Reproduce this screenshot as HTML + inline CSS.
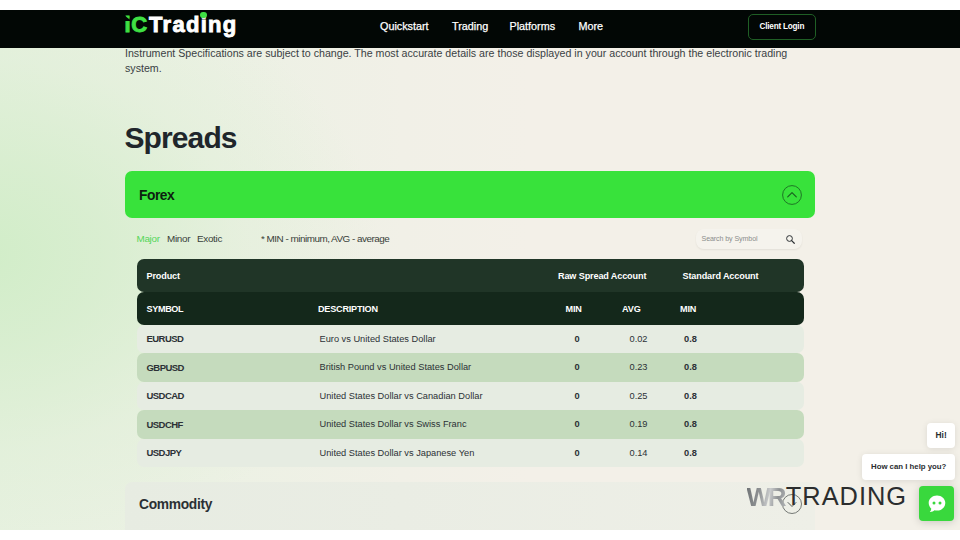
<!DOCTYPE html>
<html lang="en">
<head>
<meta charset="utf-8">
<title>IC Trading - Spreads</title>
<style>
*{margin:0;padding:0;box-sizing:border-box;}
html,body{width:960px;height:540px;overflow:hidden;background:#fff;}
body{font-family:"Liberation Sans",Arial,sans-serif;position:relative;color:#1e2328;}
.abs{position:absolute;white-space:nowrap;line-height:1;}
#page{position:absolute;left:0;top:10px;width:960px;height:520px;overflow:hidden;
  background:
    radial-gradient(ellipse 400px 300px at -20px 245px, rgba(209,237,200,1) 0%, rgba(212,237,203,0.78) 30%, rgba(218,238,209,0.35) 65%, rgba(225,240,216,0) 100%),
    linear-gradient(90deg,#e7f1e0 0%,#ecf1e4 22%,#f1f0e7 42%,#f3f0e8 55%,#f3f0e8 100%);
}
#nav{position:absolute;left:0;top:0;width:960px;height:38px;background:#020705;}
/* text */
.intro{left:125px;top:35.5px;font-size:10.65px;line-height:15.6px;color:#3a3f44;white-space:nowrap;}
h1.abs{left:124.5px;top:113.4px;font-size:30px;font-weight:700;color:#20262b;letter-spacing:-0.9px;}
.bar{position:absolute;left:125px;width:690px;border-radius:7px;}
#forex{top:161px;height:47px;background:#38e23b;}
#commodity{top:472px;height:60px;background:linear-gradient(90deg,#e7ece2 0%,#eaede4 40%,#eeefe7 100%);}
.tabs{top:224.4px;font-size:9.9px;letter-spacing:-0.3px;color:#384039;}
#tbl{position:absolute;left:137px;top:249px;width:667px;}
.hrow{position:absolute;left:0;width:667px;border-radius:7px;color:#fff;font-weight:700;font-size:9.1px;letter-spacing:-0.13px;}
.row{position:absolute;left:0;width:667px;height:28.5px;border-radius:7px;font-size:9.25px;color:#2c3136;}
.row .s{font-weight:700;letter-spacing:-0.55px;font-size:9.5px;top:9.7px;}
.row.l{background:#e6ece2;}
.row.d{background:#c5dbbd;}
.row span,.hrow span{position:absolute;white-space:nowrap;line-height:1;}
.row span{top:10px;}
.b{font-weight:700;}
</style>
</head>
<body>
<div id="page">

  <div class="abs intro">Instrument Specifications are subject to change. The most accurate details are those displayed in your account through the electronic trading<br>system.</div>

  <div id="nav">
    <span class="abs" id="logo" style="left:124.5px;top:4.3px;font-size:22px;font-weight:700;letter-spacing:1.3px;color:#fff;-webkit-text-stroke:0.9px currentColor;"><span style="color:#3fe044;letter-spacing:0.7px;margin-right:1.1px;">iC</span>Trad<span style="position:relative;">i<span style="position:absolute;left:-0.4px;top:-0.6px;width:6.4px;height:6.4px;border-radius:50%;background:#3fe044;"></span></span>ng</span>
    <div class="abs" style="left:123.6px;top:4.6px;width:7.6px;height:6.3px;background:#020705;clip-path:polygon(0 0,0 100%,100% 100%);"></div>
    <span class="abs nv" style="left:380px;top:10.5px;font-size:10.8px;color:#fff;-webkit-text-stroke:0.25px #fff;">Quickstart</span>
    <span class="abs nv" style="left:452px;top:10.5px;font-size:10.8px;color:#fff;-webkit-text-stroke:0.25px #fff;">Trading</span>
    <span class="abs nv" style="left:509.5px;top:10.5px;font-size:10.8px;color:#fff;-webkit-text-stroke:0.25px #fff;">Platforms</span>
    <span class="abs nv" style="left:578.5px;top:10.5px;font-size:10.8px;color:#fff;-webkit-text-stroke:0.25px #fff;">More</span>
    <div class="abs" style="left:748px;top:4px;width:68px;height:26px;border:1px solid #1f5f25;border-radius:5px;"></div>
    <span class="abs" style="left:759.5px;top:13.2px;font-size:8.2px;font-weight:700;letter-spacing:-0.22px;color:#fff;">Client Login</span>
  </div>

  <h1 class="abs">Spreads</h1>

  <div class="bar" id="forex">
    <span class="abs" style="left:14px;top:17.6px;font-size:13.8px;font-weight:700;letter-spacing:-0.45px;color:#0d1f10;">Forex</span>
    <svg class="abs" style="left:655.6px;top:12.5px;" width="22" height="22" viewBox="0 0 22 22"><circle cx="11" cy="11" r="9.4" fill="none" stroke="#1b6a22" stroke-width="0.9"/><path d="M6.7 12.9 L11 8.6 L15.3 12.9" fill="none" stroke="#1a5f20" stroke-width="1.15" stroke-linecap="round" stroke-linejoin="round"/></svg>
  </div>

  <span class="abs tabs" style="left:136.5px;color:#55d65a;">Major</span>
  <span class="abs tabs" style="left:167px;">Minor</span>
  <span class="abs tabs" style="left:197px;">Exotic</span>
  <span class="abs tabs" style="left:261px;letter-spacing:-0.49px;">* MIN - minimum, AVG - average</span>

  <div class="abs" style="left:696px;top:218.5px;width:106px;height:20.5px;border-radius:8px;background:rgba(255,255,255,0.22);box-shadow:0 1px 2px rgba(0,0,0,0.07);"></div>
  <span class="abs" style="left:701.5px;top:226px;font-size:7.1px;letter-spacing:-0.1px;color:#8b8d8c;">Search by Symbol</span>
  <svg class="abs" style="left:784.6px;top:223.6px;" width="10.8" height="10.8" viewBox="0 0 12 12"><circle cx="5" cy="5" r="3.2" fill="none" stroke="#2b2f33" stroke-width="1.1"/><path d="M7.4 7.4 L10.3 10.3" stroke="#2b2f33" stroke-width="1.3" stroke-linecap="round"/></svg>

  <div id="tbl">
    <div class="hrow" style="top:0;height:33px;background:#203527;">
      <span style="left:9.5px;top:12.5px;">Product</span>
      <span style="left:421px;top:12.5px;">Raw Spread Account</span>
      <span style="left:545.5px;top:12.5px;">Standard Account</span>
    </div>
    <div class="hrow" style="top:33px;height:32.5px;background:#14281b;">
      <span style="left:9.5px;top:12.5px;letter-spacing:-0.36px;">SYMBOL</span>
      <span style="left:181px;top:12.5px;letter-spacing:-0.22px;">DESCRIPTION</span>
      <span style="left:428.5px;top:12.5px;">MIN</span>
      <span style="left:485px;top:12.5px;">AVG</span>
      <span style="left:543px;top:12.5px;">MIN</span>
    </div>
    <div class="row l" style="top:65.5px;"><span class="s" style="left:9.5px;">EURUSD</span><span style="left:182.5px;">Euro vs United States Dollar</span><span class="b" style="left:437.5px;">0</span><span style="left:492.5px;">0.02</span><span class="b" style="left:547px;">0.8</span></div>
    <div class="row d" style="top:94px;"><span class="s" style="left:9.5px;">GBPUSD</span><span style="left:182.5px;">British Pound vs United States Dollar</span><span class="b" style="left:437.5px;">0</span><span style="left:492.5px;">0.23</span><span class="b" style="left:547px;">0.8</span></div>
    <div class="row l" style="top:122.5px;"><span class="s" style="left:9.5px;">USDCAD</span><span style="left:182.5px;">United States Dollar vs Canadian Dollar</span><span class="b" style="left:437.5px;">0</span><span style="left:492.5px;">0.25</span><span class="b" style="left:547px;">0.8</span></div>
    <div class="row d" style="top:151px;"><span class="s" style="left:9.5px;">USDCHF</span><span style="left:182.5px;">United States Dollar vs Swiss Franc</span><span class="b" style="left:437.5px;">0</span><span style="left:492.5px;">0.19</span><span class="b" style="left:547px;">0.8</span></div>
    <div class="row l" style="top:179.5px;"><span class="s" style="left:9.5px;">USDJPY</span><span style="left:182.5px;">United States Dollar vs Japanese Yen</span><span class="b" style="left:437.5px;">0</span><span style="left:492.5px;">0.14</span><span class="b" style="left:547px;">0.8</span></div>
  </div>

  <div class="bar" id="commodity">
    <span class="abs" style="left:14px;top:15.5px;font-size:13.8px;font-weight:700;letter-spacing:-0.3px;color:#2b3034;">Commodity</span>
    <svg class="abs" style="left:655.9px;top:11px;" width="22" height="22" viewBox="0 0 22 22"><circle cx="11" cy="11" r="9.5" fill="none" stroke="#555b58" stroke-width="0.8"/><path d="M7 9.5 L11 13.5 L15 9.5" fill="none" stroke="#555b58" stroke-width="1" stroke-linecap="round" stroke-linejoin="round"/></svg>
  </div>

  <!-- watermark -->
  <span class="abs" id="wr" style="left:746.5px;top:474.3px;font-size:26px;font-weight:700;letter-spacing:-3.4px;color:transparent;background:linear-gradient(100deg,#6f7375 0%,#8d9092 30%,#c9cbcc 55%,#8e9193 75%,#b9bbbc 100%);-webkit-background-clip:text;background-clip:text;padding-right:4px;">WR</span>
  <span class="abs" id="wt" style="left:785.8px;top:473.8px;font-size:25.4px;letter-spacing:1.0px;color:#2b2d2e;">TRADING</span>

  <!-- chat -->
  <div class="abs" style="left:927px;top:412.5px;width:27.5px;height:25px;background:#fff;border-radius:4px;box-shadow:0 1px 6px rgba(0,0,0,0.10);"></div>
  <span class="abs" style="left:935.5px;top:421px;font-size:8.4px;font-weight:700;color:#2a2d30;">Hi!</span>
  <div class="abs" style="left:862px;top:443.5px;width:92.5px;height:26.5px;background:#fff;border-radius:4px;box-shadow:0 1px 6px rgba(0,0,0,0.10);"></div>
  <span class="abs" style="left:871px;top:453.4px;font-size:7.8px;font-weight:700;color:#2a2d30;">How can I help you?</span>
  <div class="abs" style="left:919px;top:475.7px;width:35.4px;height:35.2px;background:#39d83d;border-radius:4px;box-shadow:0 1px 8px rgba(0,0,0,0.18);"></div>
  <svg class="abs" style="left:925.6px;top:483px;" width="22" height="22" viewBox="0 0 22 22"><path d="M11 2.5c-4.7 0-8.3 3.3-8.3 7.6 0 2.2 1 4.2 2.6 5.6-.1 1.2-.6 2.3-1.5 3.2 1.900.1 3.500-.5 4.700-1.600.8.2 1.600.3 2.500.3 4.700 0 8.300-3.300 8.300-7.500S15.700 2.500 11 2.500z" fill="#fff"/><circle cx="8" cy="10" r="1.5" fill="#39d83d"/><circle cx="14" cy="10" r="1.500" fill="#39d83d"/></svg>
</div>
</body>
</html>
